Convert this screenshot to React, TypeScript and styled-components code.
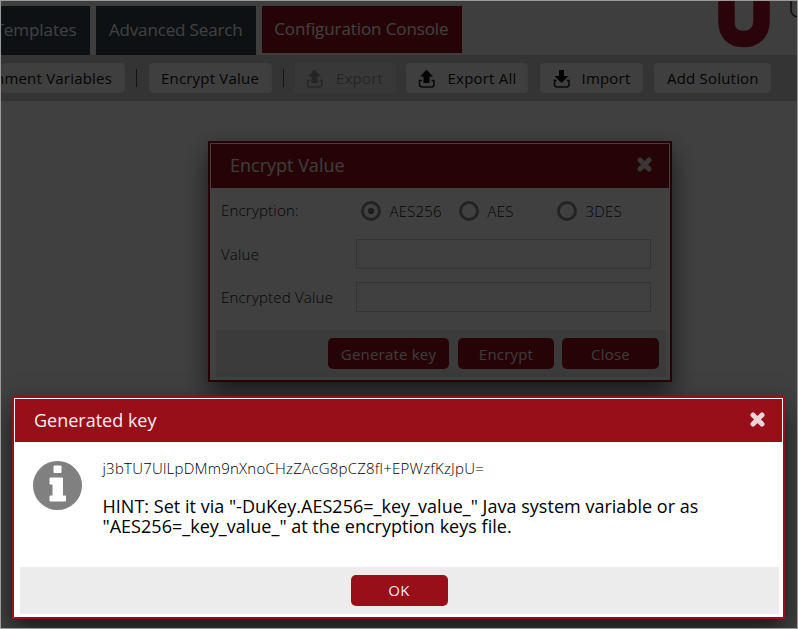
import React from "react";
import styled, { createGlobalStyle } from "styled-components";

const RED = "#980f1a";

const Global = createGlobalStyle`
  * { box-sizing: border-box; }
  body { margin: 0; background: #9b9d9c; }
  button, input { font: inherit; margin: 0; }
`;

const Screen = styled.div`
  position: relative;
  width: 798px;
  height: 629px;
  border: 1px solid #999b9a;
  background: #fff;
  overflow: hidden;
  font-family: "Open Sans", "Noto Sans", sans-serif;
  color: #111;
`;

const TopBar = styled.header`
  display: flex;
  align-items: flex-start;
  height: 54px;
  padding-top: 5px;
  background: #f6f6f6;
`;

const Tab = styled.div<{ $active?: boolean; $width: number; $spacing?: number }>`
  display: flex;
  flex: none;
  align-items: center;
  justify-content: flex-end;
  width: ${(p) => p.$width}px;
  height: ${(p) => (p.$active ? 47 : 49)}px;
  padding: 0 13.5px 2px 0;
  margin-right: 6px;
  background: ${(p) => (p.$active ? RED : "#34454f")};
  color: #fff;
  font-size: 17px;
  letter-spacing: ${(p) => p.$spacing ?? 0}px;
  white-space: nowrap;
`;

const Logo = styled.svg`
  display: block;
  flex: none;
  width: 90px;
  height: 49px;
  margin: -5px 0 0 auto;
`;

const Toolbar = styled.nav`
  display: flex;
  align-items: center;
  height: 46px;
  background: #d0d0d0;
`;

const ToolButton = styled.div<{ $width: number; $gap: number; $iconGap?: number; $disabled?: boolean }>`
  display: flex;
  flex: none;
  align-items: center;
  justify-content: ${(p) => (p.$gap < 0 ? "flex-end" : "center")};
  gap: ${(p) => p.$iconGap ?? 13}px;
  width: ${(p) => p.$width}px;
  height: 30px;
  padding: ${(p) => (p.$gap < 0 ? "0 12px 0 0" : "0")};
  margin-left: ${(p) => Math.max(p.$gap, 0)}px;
  border: 1px solid #f4f4f4;
  border-radius: 4px;
  background: #fbfbfb;
  opacity: ${(p) => (p.$disabled ? 0.3 : 1)};
  font-size: 15px;
  letter-spacing: 0.2px;
  white-space: nowrap;
`;

const Separator = styled.div`
  flex: none;
  width: 1px;
  height: 18px;
  margin-left: 11px;
  background: #555;
`;

const Overlay = styled.div`
  position: absolute;
  inset: 0;
  background: rgba(0, 0, 0, 0.75);
`;

const Dialog = styled.section<{ $x: number; $y: number; $w: number; $h: number }>`
  position: absolute;
  left: ${(p) => p.$x}px;
  top: ${(p) => p.$y}px;
  display: flex;
  flex-direction: column;
  width: ${(p) => p.$w}px;
  height: ${(p) => p.$h}px;
  border: 2px solid ${RED};
  background: #fff;
  box-shadow: 0 11px 24px rgba(0, 0, 0, 0.6);
`;

const DialogHeader = styled.div<{ $height: number }>`
  display: flex;
  flex: none;
  align-items: center;
  justify-content: space-between;
  height: ${(p) => p.$height}px;
  margin: 1px 1px 0;
  padding: 0 17px 2px 19px;
  background: ${RED};
  color: #fff;
`;

const DialogTitle = styled.h2`
  margin: 0;
  font-size: 18px;
  font-weight: 400;
  line-height: 24px;
  opacity: 0.93;
`;

const CloseMark = styled.svg`
  width: 15px;
  height: 15px;
  margin-top: -1px;
  opacity: 0.82;
`;

const FormBody = styled.div`
  display: flex;
  flex: 1;
  flex-direction: column;
  gap: 13px;
  padding: 8px 0 0 11px;
`;

const FormRow = styled.div<{ $raised?: boolean }>`
  display: flex;
  align-items: center;
  height: 30px;
  padding-bottom: ${(p) => (p.$raised ? 2 : 0)}px;
`;

const Label = styled.label`
  flex: none;
  width: 135px;
  font-size: 15px;
  font-weight: 300;
  letter-spacing: 0.2px;
`;

const Field = styled.input`
  width: 295px;
  height: 30px;
  border: 1px solid #d2d2d2;
  background: #fff;
`;

const Choice = styled.span<{ $width: number }>`
  display: flex;
  flex: none;
  align-items: center;
  gap: 8.5px;
  width: ${(p) => p.$width}px;
  padding: 1px 0 0 5px;
  font-size: 15px;
  font-weight: 300;
  letter-spacing: 0.2px;
`;

const Ring = styled.span<{ $checked?: boolean }>`
  width: 20px;
  height: 20px;
  border: 3px solid #8c8c8c;
  border-radius: 50%;
  background: ${(p) =>
    p.$checked ? "radial-gradient(circle, #777 0 3px, transparent 3.6px)" : "transparent"};
`;

const Footer = styled.footer<{ $center?: boolean }>`
  display: flex;
  flex: none;
  align-items: center;
  justify-content: ${(p) => (p.$center ? "center" : "flex-end")};
  gap: 8px;
  height: 47px;
  margin: 0 4px 3px 6px;
  padding-right: ${(p) => (p.$center ? 0 : 7)}px;
  background: #ececec;
`;

const ActionButton = styled.button<{ $width: number; $after?: number; $lift?: number }>`
  width: ${(p) => p.$width}px;
  height: 31px;
  padding: 0 0 ${(p) => p.$lift ?? 0}px;
  margin-right: ${(p) => p.$after ?? 0}px;
  border: 0;
  border-radius: 5px;
  background: ${RED};
  color: rgba(255, 255, 255, 0.93);
  font-size: 15px;
  letter-spacing: 0.2px;
`;

const MessageBody = styled.div`
  display: flex;
  flex: 1;
  align-items: flex-start;
  padding: 16px 0 0 18.5px;
`;

const InfoIcon = styled.svg`
  flex: none;
  width: 50px;
  height: 50px;
  margin-top: 2px;
`;

const Message = styled.div`
  margin-left: 20px;
  color: #000;
  white-space: nowrap;
`;

const KeyText = styled.p`
  margin: 0;
  font-size: 15px;
  font-weight: 300;
  line-height: 20px;
  letter-spacing: 0.23px;
`;

const Hint = styled.p`
  margin: 18px 0 0;
  font-size: 18px;
  line-height: 20px;
  letter-spacing: 0.02px;
`;

const UploadIcon = () => (
  <svg width="18" height="19" viewBox="0 0 18 19">
    <path d="M8.500 0.500 15 7.500H11.500V14H5.500V7.500H2Z" fill="#111" />
    <path d="M4 11.500H1.500V15.500Q1.500 18 4 18H13.500Q16 18 16 15.500V11.500H13.500" fill="none" stroke="#222" strokeWidth="1.5" />
  </svg>
);

const DownloadIcon = () => (
  <svg width="18" height="19" viewBox="0 0 18 19">
    <path d="M6 1H11V7H15.500L8.500 14 1.500 7H6Z" fill="#111" />
    <path d="M3.500 11.500H1.500V15.500Q1.500 18 4 18H13.500Q16 18 16 15.500V11.500H14" fill="none" stroke="#222" strokeWidth="1.5" />
  </svg>
);

const Cross = () => (
  <CloseMark viewBox="0 0 15 15">
    <path d="M3 3 12 12M12 3 3 12" stroke="#fff" strokeWidth="5" strokeLinecap="round" />
  </CloseMark>
);

export default function App() {
  return (
    <>
      <Global />
      <Screen>
        <TopBar>
          <Tab $width={89} $spacing={-0.05}>Templates</Tab>
          <Tab $width={160} $spacing={-0.15}>Advanced Search</Tab>
          <Tab $width={200} $spacing={-0.1} $active>Configuration Console</Tab>
          <Logo viewBox="0 0 90 49">
            <path d="M19.500 -12V20C19.500 32 25.500 38 36.500 38S54.500 32 54.500 20V-12" fill="none" stroke="#ad102d" strokeWidth="16.5" />
            <path d="M84 0V9Q84.500 14 88.500 15.500H92" fill="none" stroke="#27404a" strokeWidth="1.5" />
          </Logo>
        </TopBar>
        <Toolbar>
          <ToolButton $width={124} $gap={-1}>Environment Variables</ToolButton>
          <Separator />
          <ToolButton $width={123} $gap={11.5}>Encrypt Value</ToolButton>
          <Separator />
          <ToolButton $width={102} $gap={10} $iconGap={12} $disabled><UploadIcon />Export</ToolButton>
          <ToolButton $width={122} $gap={10.5} $iconGap={12}><UploadIcon />Export All</ToolButton>
          <ToolButton $width={103} $gap={12} $iconGap={11}><DownloadIcon />Import</ToolButton>
          <ToolButton $width={117} $gap={11.4}>Add Solution</ToolButton>
        </Toolbar>

        <Dialog $x={207} $y={140} $w={464} $h={241}>
          <DialogHeader $height={44}>
            <DialogTitle>Encrypt Value</DialogTitle>
            <Cross />
          </DialogHeader>
          <FormBody>
            <FormRow $raised>
              <Label>Encryption:</Label>
              <Choice $width={98}><Ring $checked />AES256</Choice>
              <Choice $width={98}><Ring />AES</Choice>
              <Choice $width={98}><Ring />3DES</Choice>
            </FormRow>
            <FormRow><Label>Value</Label><Field /></FormRow>
            <FormRow><Label>Encrypted Value</Label><Field /></FormRow>
          </FormBody>
          <Footer>
            <ActionButton $width={121} $after={1}>Generate key</ActionButton>
            <ActionButton $width={96}>Encrypt</ActionButton>
            <ActionButton $width={97}>Close</ActionButton>
          </Footer>
        </Dialog>

        <Overlay />

        <Dialog $x={11} $y={395} $w={773} $h={223}>
          <DialogHeader $height={43}>
            <DialogTitle>Generated key</DialogTitle>
            <Cross />
          </DialogHeader>
          <MessageBody>
            <InfoIcon viewBox="0 0 50 50">
              <circle cx="24.5" cy="25.5" r="24.5" fill="#808080" />
              <path d="M21 6H28V12.500H21ZM17 18H29.500V36H32.500V41H17V36H20V24H17Z" fill="#fff" stroke="#fff" strokeLinejoin="round" />
            </InfoIcon>
            <Message>
              <KeyText>j3bTU7UlLpDMm9nXnoCHzZAcG8pCZ8fl+EPWzfKzJpU=</KeyText>
              <Hint>
                HINT: Set it via "-DuKey.AES256=_key_value_" Java system variable or as
                <br />
                "AES256=_key_value_" at the encryption keys file.
              </Hint>
            </Message>
          </MessageBody>
          <Footer $center>
            <ActionButton $width={97} $after={1} $lift={1}>OK</ActionButton>
          </Footer>
        </Dialog>
      </Screen>
    </>
  );
}
